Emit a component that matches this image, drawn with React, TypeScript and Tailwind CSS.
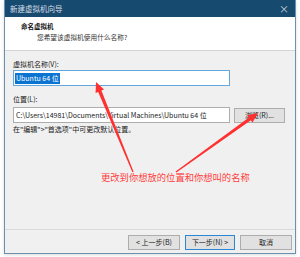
import React from 'react';

type Pt = [number, number];

// tapered red annotation arrow, tail -> tip
const arrowPoints = (tail: Pt, tip: Pt, wTail: number, wBase: number, headLen: number, headW: number) => {
  const dx = tip[0] - tail[0];
  const dy = tip[1] - tail[1];
  const len = Math.hypot(dx, dy);
  const ux = dx / len;
  const uy = dy / len;
  const nx = -uy;
  const ny = ux;
  const bx = tip[0] - ux * headLen;
  const by = tip[1] - uy * headLen;
  const pts: Pt[] = [
    [tail[0] + (nx * wTail) / 2, tail[1] + (ny * wTail) / 2],
    [bx + (nx * wBase) / 2, by + (ny * wBase) / 2],
    [bx + (nx * headW) / 2, by + (ny * headW) / 2],
    tip,
    [bx - (nx * headW) / 2, by - (ny * headW) / 2],
    [bx - (nx * wBase) / 2, by - (ny * wBase) / 2],
    [tail[0] - (nx * wTail) / 2, tail[1] - (ny * wTail) / 2],
  ];
  return pts.map((p) => `${p[0].toFixed(1)},${p[1].toFixed(1)}`).join(' ');
};

const WinButton: React.FC<{ children: React.ReactNode; primary?: boolean; className?: string }> = ({
  children,
  primary,
  className = '',
}) => (
  <div
    className={`h-[15px] flex items-center justify-center bg-[#e1e1e1] text-[7px] leading-none text-[#222] border ${
      primary ? 'border-[#2b86d6]' : 'border-[#adadad]'
    } ${className}`}
  >
    {children}
  </div>
);

export default function App() {
  return (
    <div className="relative w-[300px] h-[257px] bg-white overflow-hidden font-['Microsoft_YaHei','Noto_Sans_CJK_SC',sans-serif]">
      <div className="ml-[4px] w-[292px] h-[254px] flex flex-col border border-t-0 border-[#6b91b0] bg-[#f0f0f0] shadow-[0_1px_3px_rgba(0,0,0,0.15)]">
        {/* Title bar */}
        <div className="h-[17px] bg-[#174a6f] flex items-center justify-between pl-[5px] pr-[6px]">
          <span className="text-[7.5px] leading-none text-[#d6dee6]">新建虚拟机向导</span>
          <span className="text-[10px] leading-none text-[#c9d3dc]">×</span>
        </div>

        {/* Header */}
        <div className="h-[34px] bg-white border-b border-[#d5d5d5] pl-[16px]">
          <div className="mt-[5px] text-[6.5px] leading-[9px] font-bold text-[#111]">命名虚拟机</div>
          <div className="mt-[2px] ml-[16px] text-[6.7px] leading-[9px] text-[#333]">您希望该虚拟机使用什么名称?</div>
        </div>

        {/* Body */}
        <div className="flex-1 pl-[8px] pr-[10px] text-[7px] text-[#1a1a1a]">
          <div className="mt-[8px] h-[11px] leading-[11px]">虚拟机名称(V):</div>
          <div className="w-[217px] h-[16px] bg-white border border-[#63a7dd] flex items-center pl-[1px]">
            <span className="bg-[#0a74d0] text-white leading-[11px] px-[1px]">Ubuntu 64 位</span>
          </div>

          <div className="mt-[7px] h-[12px] leading-[12px]">位置(L):</div>
          <div className="mt-[2px] flex items-center gap-[4px]">
            <div className="w-[217px] h-[16px] bg-white border border-[#adadad] flex items-center pl-[2px] overflow-hidden whitespace-nowrap">
              C:\Users\14981\Documents\Virtual Machines\Ubuntu 64 位
            </div>
            <WinButton className="w-[51px]">浏览(R)...</WinButton>
          </div>
          <div className="h-[12px] leading-[12px] mt-[0px]">在"编辑"&gt;"首选项"中可更改默认位置。</div>

          <div className="mt-[36px] ml-[88px] text-[9.3px] leading-[12px] text-[#ff3d3d] whitespace-nowrap">
            更改到你想放的位置和你想叫的名称
          </div>
        </div>

        {/* Footer */}
        <div className="h-[24px] border-t border-[#dadada] flex justify-end gap-[5px] pt-[5px] pr-[3px]">
          <WinButton className="w-[52px]">&lt; 上一步(B)</WinButton>
          <WinButton primary className="w-[50px]">下一步(N) &gt;</WinButton>
          <WinButton className="w-[52px]">取消</WinButton>
        </div>
      </div>

      {/* annotation arrows */}
      <svg className="absolute inset-0 pointer-events-none" width={300} height={257} viewBox="0 0 300 257">
        <polygon points={arrowPoints([133, 172], [96, 82], 1.4, 3.4, 10, 9)} fill="#ff3030" />
        <polygon points={arrowPoints([176, 172], [258, 113], 1.4, 3.4, 10, 9)} fill="#ff3030" />
      </svg>
    </div>
  );
}
